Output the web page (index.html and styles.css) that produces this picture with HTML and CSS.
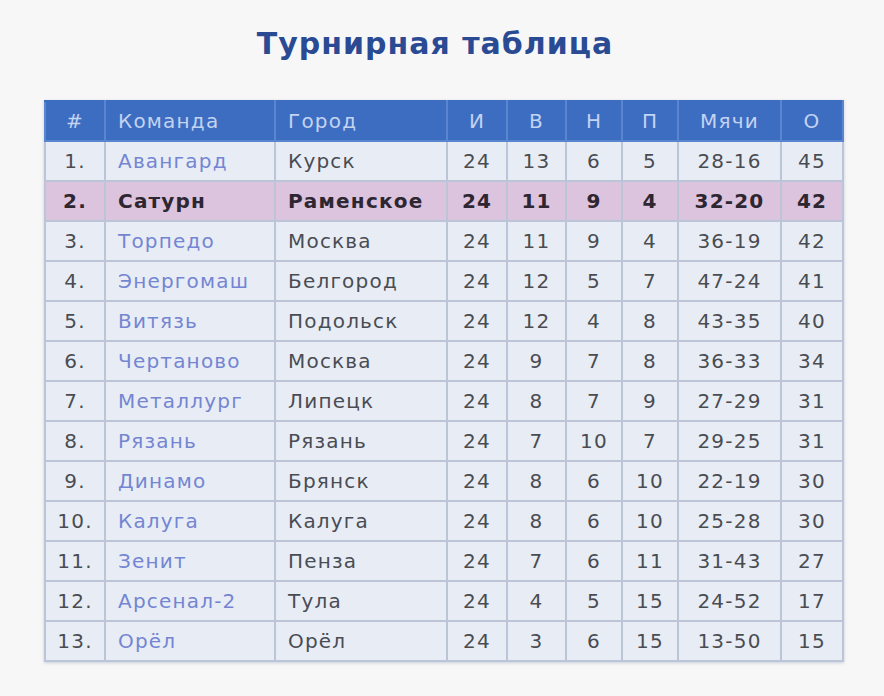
FILE: index.html
```html
<!DOCTYPE html>
<html lang="ru">
<head>
<meta charset="utf-8">
<title>Турнирная таблица</title>
<link rel="stylesheet" href="styles.css">
</head>
<body>
<div class="page">
  <h1 class="title">Турнирная таблица</h1>
  <table class="standings">
    <colgroup>
      <col class="c-pos"><col class="c-team"><col class="c-city"><col class="c-g"><col class="c-w"><col class="c-d"><col class="c-l"><col class="c-goals"><col class="c-pts">
    </colgroup>
    <thead>
      <tr><th>#</th><th class="left">Команда</th><th class="left">Город</th><th>И</th><th>В</th><th>Н</th><th>П</th><th>Мячи</th><th>О</th></tr>
    </thead>
    <tbody>
      <tr><td>1.</td><td class="team">Авангард</td><td class="city">Курск</td><td>24</td><td>13</td><td>6</td><td>5</td><td>28-16</td><td>45</td></tr>
      <tr class="hl"><td>2.</td><td class="team">Сатурн</td><td class="city">Раменское</td><td>24</td><td>11</td><td>9</td><td>4</td><td>32-20</td><td>42</td></tr>
      <tr><td>3.</td><td class="team">Торпедо</td><td class="city">Москва</td><td>24</td><td>11</td><td>9</td><td>4</td><td>36-19</td><td>42</td></tr>
      <tr><td>4.</td><td class="team">Энергомаш</td><td class="city">Белгород</td><td>24</td><td>12</td><td>5</td><td>7</td><td>47-24</td><td>41</td></tr>
      <tr><td>5.</td><td class="team">Витязь</td><td class="city">Подольск</td><td>24</td><td>12</td><td>4</td><td>8</td><td>43-35</td><td>40</td></tr>
      <tr><td>6.</td><td class="team">Чертаново</td><td class="city">Москва</td><td>24</td><td>9</td><td>7</td><td>8</td><td>36-33</td><td>34</td></tr>
      <tr><td>7.</td><td class="team">Металлург</td><td class="city">Липецк</td><td>24</td><td>8</td><td>7</td><td>9</td><td>27-29</td><td>31</td></tr>
      <tr><td>8.</td><td class="team">Рязань</td><td class="city">Рязань</td><td>24</td><td>7</td><td>10</td><td>7</td><td>29-25</td><td>31</td></tr>
      <tr><td>9.</td><td class="team">Динамо</td><td class="city">Брянск</td><td>24</td><td>8</td><td>6</td><td>10</td><td>22-19</td><td>30</td></tr>
      <tr><td>10.</td><td class="team">Калуга</td><td class="city">Калуга</td><td>24</td><td>8</td><td>6</td><td>10</td><td>25-28</td><td>30</td></tr>
      <tr><td>11.</td><td class="team">Зенит</td><td class="city">Пенза</td><td>24</td><td>7</td><td>6</td><td>11</td><td>31-43</td><td>27</td></tr>
      <tr><td>12.</td><td class="team">Арсенал-2</td><td class="city">Тула</td><td>24</td><td>4</td><td>5</td><td>15</td><td>24-52</td><td>17</td></tr>
      <tr><td>13.</td><td class="team">Орёл</td><td class="city">Орёл</td><td>24</td><td>3</td><td>6</td><td>15</td><td>13-50</td><td>15</td></tr>
    </tbody>
  </table>
</div>
</body>
</html>
```

FILE: styles.css
```css
html, body {
  margin: 0;
  padding: 0;
  background: #f7f7f8;
}
.page {
  width: 884px;
  height: 696px;
  display: flex;
  flex-direction: column;
  align-items: center;
  font-family: "DejaVu Sans", Verdana, sans-serif;
}
.title {
  margin: 25px 0 0 0;
  height: 38px;
  line-height: 38px;
  font-size: 30px;
  font-weight: bold;
  color: #2a4b94;
  padding-right: 14px;
  letter-spacing: 1px;
}
.standings {
  margin: 37px 0 0 4px;
  border-collapse: collapse;
  table-layout: fixed;
  width: 798px;
  font-size: 20px;
  letter-spacing: 1.2px;
  box-shadow: 0 1px 3px rgba(120, 130, 160, 0.35);
}
.c-pos { width: 60px; }
.c-team { width: 170px; }
.c-city { width: 172px; }
.c-g { width: 60px; }
.c-w { width: 59px; }
.c-d { width: 56px; }
.c-l { width: 56px; }
.c-goals { width: 103px; }
.c-pts { width: 62px; }
.standings th {
  background: #3d6dc0;
  color: #c3d3f2;
  font-weight: normal;
  height: 38px;
  padding: 0;
  text-align: center;
  border: 2px solid #5a86cf;
  border-top-color: #3d6dc0;
}
.standings th.left {
  text-align: left;
  padding-left: 12px;
}
.standings td {
  background: #e8edf5;
  color: #4a4c52;
  height: 38px;
  padding: 0;
  text-align: center;
  border: 2px solid #bcc4d8;
}
.standings td.team {
  text-align: left;
  padding-left: 12px;
  color: #7485d2;
}
.standings td.city {
  text-align: left;
  padding-left: 12px;
  color: #4a4c54;
}
.standings tr.hl td {
  background: #dcc3de;
  color: #2e2630;
  font-weight: bold;
}
```
